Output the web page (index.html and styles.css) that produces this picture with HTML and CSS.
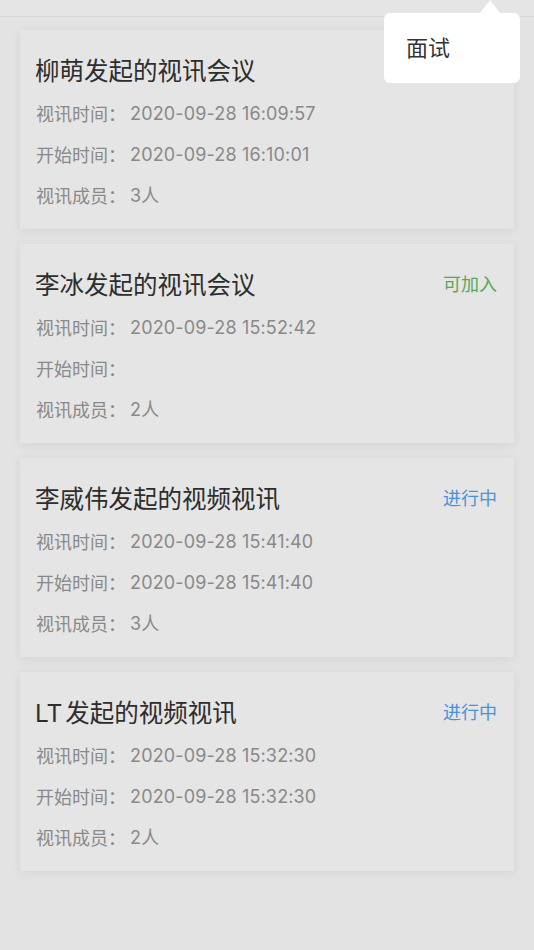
FILE: index.html
```html
<!DOCTYPE html>
<html lang="zh-CN">
<head>
<meta charset="utf-8">
<title>视讯列表</title>
<link rel="stylesheet" href="styles.css">
</head>
<body>
<div class="page">
  <div class="topbar"></div>
  <div class="list">
    <div class="card">
      <div class="card-head">
        <div class="title">柳萌发起的视讯会议</div>
      </div>
      <div class="row"><span class="label">视讯时间<span class="colon">：</span></span><span class="value">2020-09-28 16:09:57</span></div>
      <div class="row"><span class="label">开始时间<span class="colon">：</span></span><span class="value">2020-09-28 16:10:01</span></div>
      <div class="row"><span class="label">视讯成员<span class="colon">：</span></span><span class="value">3人</span></div>
    </div>
    <div class="card">
      <div class="card-head">
        <div class="title">李冰发起的视讯会议</div>
        <div class="status status-join">可加入</div>
      </div>
      <div class="row"><span class="label">视讯时间<span class="colon">：</span></span><span class="value">2020-09-28 15:52:42</span></div>
      <div class="row"><span class="label">开始时间<span class="colon">：</span></span><span class="value"></span></div>
      <div class="row"><span class="label">视讯成员<span class="colon">：</span></span><span class="value">2人</span></div>
    </div>
    <div class="card">
      <div class="card-head">
        <div class="title">李威伟发起的视频视讯</div>
        <div class="status status-live">进行中</div>
      </div>
      <div class="row"><span class="label">视讯时间<span class="colon">：</span></span><span class="value">2020-09-28 15:41:40</span></div>
      <div class="row"><span class="label">开始时间<span class="colon">：</span></span><span class="value">2020-09-28 15:41:40</span></div>
      <div class="row"><span class="label">视讯成员<span class="colon">：</span></span><span class="value">3人</span></div>
    </div>
    <div class="card">
      <div class="card-head">
        <div class="title">LT 发起的视频视讯</div>
        <div class="status status-live">进行中</div>
      </div>
      <div class="row"><span class="label">视讯时间<span class="colon">：</span></span><span class="value">2020-09-28 15:32:30</span></div>
      <div class="row"><span class="label">开始时间<span class="colon">：</span></span><span class="value">2020-09-28 15:32:30</span></div>
      <div class="row"><span class="label">视讯成员<span class="colon">：</span></span><span class="value">2人</span></div>
    </div>
  </div>
</div>
<div class="mask"></div>
<div class="popover">
  <div class="popover-arrow"></div>
  <div class="popover-item">面试</div>
</div>
</body>
</html>
```
FILE: styles.css
```css
html, body {
  margin: 0;
  padding: 0;
}
body {
  width: 534px;
  height: 950px;
  overflow: hidden;
  background: #fdfdfd;
  font-family: "Inter", "Noto Sans CJK SC", sans-serif;
}
.page {
  display: flex;
  flex-direction: column;
}
.topbar {
  height: 16px;
  background: #ffffff;
  border-bottom: 1px solid #efefef;
}
.list {
  display: flex;
  flex-direction: column;
  gap: 15px;
  padding: 13px 20px 0 20px;
}
.card {
  background: #ffffff;
  height: 199px;
  box-sizing: border-box;
  padding: 23px 17px 13px 16px;
  box-shadow: 0 2px 10px rgba(0, 0, 0, 0.07);
  display: flex;
  flex-direction: column;
}
.card-head {
  display: flex;
  justify-content: space-between;
  align-items: center;
  height: 36px;
  margin-bottom: 4px;
}
.title {
  font-size: 24.5px;
  color: #333333;
  line-height: 36px;
  margin-left: -1px;
  word-spacing: -4px;
}
.status {
  font-size: 18px;
  line-height: 36px;
}
.status-join {
  color: #62bd66;
}
.status-live {
  color: #52a4f6;
}
.row {
  display: flex;
  font-size: 18px;
  line-height: 41px;
  height: 41px;
  color: #999999;
}
.colon {
  font-family: "Noto Sans CJK TC", "Noto Sans CJK SC", sans-serif;
}
.value {
  margin-left: 4px;
  letter-spacing: 0.15px;
}
.mask {
  position: fixed;
  inset: 0;
  background: rgba(0, 0, 0, 0.1);
}
.popover {
  position: absolute;
  top: 13px;
  right: 14px;
  width: 136px;
  height: 70px;
  background: #ffffff;
  border-radius: 6px;
  display: flex;
  align-items: center;
  box-sizing: border-box;
  padding-left: 22px;
}
.popover-arrow {
  position: absolute;
  top: -13px;
  right: 20px;
  width: 0;
  height: 0;
  border-left: 10px solid transparent;
  border-right: 10px solid transparent;
  border-bottom: 13px solid #ffffff;
}
.popover-item {
  font-size: 22px;
  color: #333333;
  line-height: 28px;
}
```
